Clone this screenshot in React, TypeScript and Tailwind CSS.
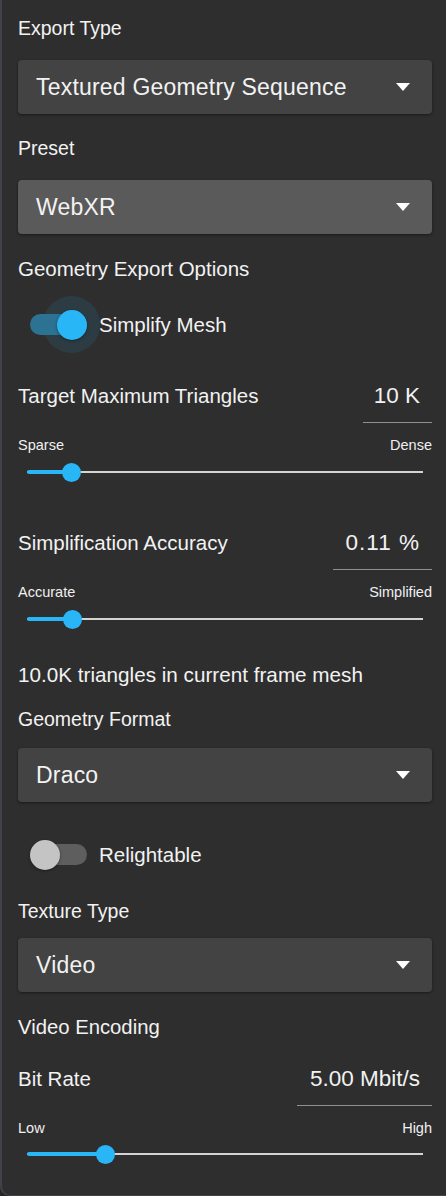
import React from "react";

const font = { fontFamily: '"Liberation Sans", Arial, sans-serif' };

function SectionLabel({ children, className = "" }: { children: React.ReactNode; className?: string }) {
  return <div className={`leading-[24px] text-[#f2f2f2] ${className}`}>{children}</div>;
}

function Dropdown({ value, light = false, className = "" }: { value: string; light?: boolean; className?: string }) {
  return (
    <div
      className={`flex items-center justify-between h-[54px] rounded-[4px] pl-[18px] pr-[22px] shadow-[0_1px_3px_rgba(0,0,0,0.45)] ${
        light ? "bg-[#5a5a5a]" : "bg-[#434343]"
      } ${className}`}
    >
      <span className="text-[23px] leading-[28px] text-[#f2f2f2] tracking-[0.2px]">{value}</span>
      <span className="w-0 h-0 border-l-[7px] border-r-[7px] border-t-[8px] border-l-transparent border-r-transparent border-t-white" />
    </div>
  );
}

function Switch({ checked, label, className = "" }: { checked: boolean; label: string; className?: string }) {
  return (
    <div className={`flex items-center h-[57px] ${className}`}>
      <div className="relative w-[81px] h-[57px] shrink-0">
        {checked && <div className="absolute left-[25px] top-0 w-[57px] h-[57px] rounded-full bg-[rgba(41,182,246,0.1)]" />}
        <div
          className={`absolute left-[12px] top-[18px] w-[57px] h-[21px] rounded-full ${
            checked ? "bg-[#2c7292]" : "bg-[#5e5e5e]"
          }`}
        />
        <div
          className={`absolute top-[13.5px] w-[30px] h-[30px] rounded-full shadow-[0_1px_3px_rgba(0,0,0,0.4)] ${
            checked ? "left-[39px] bg-[#29b6f6]" : "left-[12px] bg-[#c4c4c4]"
          }`}
        />
      </div>
      <span className="text-[20.5px] leading-[24px] text-[#f2f2f2]">{label}</span>
    </div>
  );
}

function ValueRow({
  label,
  value,
  boxW,
  valueClass = "",
  className = "",
}: {
  label: string;
  value: string;
  boxW: string;
  valueClass?: string;
  className?: string;
}) {
  return (
    <div className={`flex justify-between items-start h-[39px] ${className}`}>
      <span className="text-[20.5px] leading-[24px] text-[#f2f2f2]">{label}</span>
      <div className={`${boxW} h-[39px] border-b border-[#8f8f8f] text-right pr-[12px]`}>
        <span className={`text-[22.5px] leading-[24px] text-[#f2f2f2] ${valueClass}`}>{value}</span>
      </div>
    </div>
  );
}

function SmallLabels({ left, right, className = "" }: { left: string; right: string; className?: string }) {
  return (
    <div className={`flex justify-between h-[18px] text-[14.5px] leading-[18px] text-[#f0f0f0] ${className}`}>
      <span>{left}</span>
      <span>{right}</span>
    </div>
  );
}

function Slider({ pos, className = "" }: { pos: number; className?: string }) {
  return (
    <div className={`relative h-[20px] mx-[9px] ${className}`}>
      <div className="absolute left-0 right-0 top-[9px] h-[2px] bg-[#d4d4d4]" />
      <div className="absolute left-0 top-[8px] h-[4px] rounded-full bg-[#29b6f6]" style={{ width: pos }} />
      <div
        className="absolute top-[0.5px] w-[19px] h-[19px] rounded-full bg-[#29b6f6]"
        style={{ left: pos - 9.5 }}
      />
    </div>
  );
}

export default function App() {
  return (
    <div className="w-[446px] h-[1196px] bg-[#262626]" style={font}>
      <div className="w-[446px] h-[1196px] bg-[#2e2e2e] border-l-2 border-b border-[#40444a] rounded-bl-[10px] pl-[16px] pr-[14px] pt-[16px] flex flex-col">
        <SectionLabel className="text-[19.5px]">Export Type</SectionLabel>
        <Dropdown value="Textured Geometry Sequence" className="mt-[20px]" />
        <SectionLabel className="mt-[22px] text-[19.5px]">Preset</SectionLabel>
        <Dropdown value="WebXR" light className="mt-[20px]" />
        <SectionLabel className="mt-[23px] text-[20.5px]">Geometry Export Options</SectionLabel>
        <Switch checked label="Simplify Mesh" className="mt-[15px]" />
        <ValueRow label="Target Maximum Triangles" value="10 K" boxW="w-[69px]" className="mt-[31px]" />
        <SmallLabels left="Sparse" right="Dense" className="mt-[13px]" />
        <Slider pos={44} className="mt-[8px]" />
        <ValueRow
          label="Simplification Accuracy"
          value="0.11 %"
          boxW="w-[99px]"
          valueClass="tracking-[1px]"
          className="mt-[49px]"
        />
        <SmallLabels left="Accurate" right="Simplified" className="mt-[13px]" />
        <Slider pos={45} className="mt-[8px]" />
        <div className="mt-[34px] text-[20.7px] leading-[24px] text-[#f2f2f2]">10.0K triangles in current frame mesh</div>
        <SectionLabel className="mt-[20px] text-[19.5px]">Geometry Format</SectionLabel>
        <Dropdown value="Draco" className="mt-[17px]" />
        <Switch checked={false} label="Relightable" className="mt-[24px]" />
        <SectionLabel className="mt-[16px] text-[19.5px]">Texture Type</SectionLabel>
        <Dropdown value="Video" className="mt-[15px]" />
        <SectionLabel className="mt-[23px] text-[20.3px]">Video Encoding</SectionLabel>
        <ValueRow label="Bit Rate" value="5.00 Mbit/s" boxW="w-[135px]" className="mt-[28px]" />
        <SmallLabels left="Low" right="High" className="mt-[13px]" />
        <Slider pos={78} className="mt-[7px]" />
      </div>
    </div>
  );
}
